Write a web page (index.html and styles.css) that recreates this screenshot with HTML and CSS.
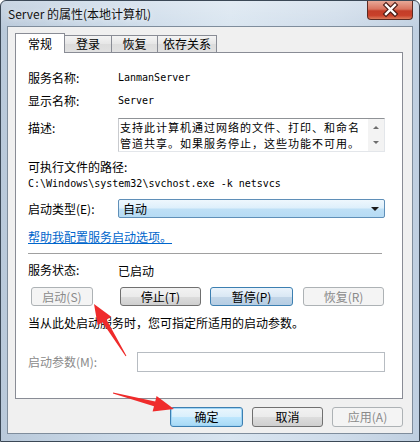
FILE: index.html
```html
<!DOCTYPE html>
<html>
<head>
<meta charset="utf-8">
<link rel="stylesheet" href="styles.css">
</head>
<body>
<div class="window">
  <div class="titlebar">
    <span class="title">Server 的属性(本地计算机)</span>
    <div class="close">
      <svg width="46" height="19" viewBox="0 0 46 19">
        <path d="M19 5 L28 14 M28 5 L19 14" stroke="#4a1a14" stroke-width="4.6" stroke-linecap="square"/>
        <path d="M19 5 L28 14 M28 5 L19 14" stroke="#ffffff" stroke-width="2.4" stroke-linecap="square"/>
      </svg>
    </div>
  </div>
  <div class="client">
    <div class="tabs">
      <div class="tab active">常规</div>
      <div class="tab t2">登录</div>
      <div class="tab t3">恢复</div>
      <div class="tab t4">依存关系</div>
    </div>
    <div class="panel">
      <div class="row r1"><span class="label">服务名称:</span><span class="mono">LanmanServer</span></div>
      <div class="row r2"><span class="label">显示名称:</span><span class="mono">Server</span></div>
      <div class="row desc-row">
        <span class="label desc-label">描述:</span>
        <div class="descbox">
          <div class="desc-text"><div>支持此计算机通过网络的文件、打印、和命名</div><div>管道共享。如果服务停止，这些功能不可用。</div></div>
          <div class="vscroll"><span class="arr-up"></span><span class="arr-down"></span></div>
        </div>
      </div>
      <div class="line exec-label">可执行文件的路径:</div>
      <div class="line mono path">C:\Windows\system32\svchost.exe -k netsvcs</div>
      <div class="row select-row">
        <span class="label">启动类型(E):</span>
        <div class="select"><span>自动</span><span class="caret"></span></div>
      </div>
      <div class="line link">帮助我配置服务启动选项。</div>
      <div class="sep"></div>
      <div class="row status-row"><span class="label">服务状态:</span><span>已启动</span></div>
      <div class="svc-buttons">
        <div class="btn disabled b1">启动(S)</div>
        <div class="btn b2">停止(T)</div>
        <div class="btn hover b3">暂停(P)</div>
        <div class="btn disabled b4">恢复(R)</div>
      </div>
      <div class="line hint">当从此处启动服务时，您可指定所适用的启动参数。</div>
      <div class="row param-row">
        <span class="label param-label">启动参数(M):</span>
        <div class="param-box"></div>
      </div>
    </div>
    <div class="footer">
      <div class="btn default ok">确定</div>
      <div class="btn cancel">取消</div>
      <div class="btn disabled apply">应用(A)</div>
    </div>
  </div>
  <svg class="annot" width="420" height="442" viewBox="0 0 420 442">
    <polygon fill="#ef2b2b" points="126.4,355.7 106.6,319.7 111.3,316.8 94,304 97.7,325.2 102.4,322.3 125.6,356.3"/>
    <polygon fill="#ef2b2b" points="112.9,393.5 154.0,406.3 152.6,411.6 174,409 156.6,396.1 155.2,401.5 113.1,392.5"/>
  </svg>
</div>
</body>
</html>
```

FILE: styles.css
```css
* { box-sizing: border-box; }
html, body { margin: 0; padding: 0; }
body {
  width: 420px;
  height: 442px;
  overflow: hidden;
  font-family: "Noto Sans CJK SC", "Liberation Sans", sans-serif;
  font-size: 12px;
  color: #000;
  background: #fff;
}
.window {
  position: relative;
  width: 420px;
  height: 442px;
  border: 1px solid #3b4856;
  border-radius: 6px 6px 0 0;
  padding: 0 6px 7px 6px;
  background:
    linear-gradient(to bottom, rgba(255,255,255,0.25), rgba(255,255,255,0) 30px),
    linear-gradient(to right, #b9c9da 0%, #c9d8e7 25%, #d9e5f0 55%, #cfdcea 80%, #bfcfe0 100%);
}
.titlebar {
  height: 25px;
  display: flex;
  justify-content: space-between;
  align-items: flex-start;
  padding-left: 1px;
}
.title {
  line-height: 25px;
  font-size: 12px;
  color: #111;
  text-shadow: 0 0 6px rgba(255,255,255,0.9);
}
.close {
  width: 46px;
  height: 19px;
  border: 1px solid #5b2a22;
  border-top: none;
  border-radius: 0 0 4px 4px;
  background: linear-gradient(to bottom, #e8a897 0%, #d9745f 45%, #c33d28 55%, #c9402a 80%, #dc7a5a 100%);
  display: flex;
}
.close svg { display: block; margin: -1px; }
.client {
  width: 406px;
  height: 408px;
  border: 1px solid #7f8d9c;
  background: #f0f0f0;
  padding: 6px 0 0 7px;
}
.tabs {
  display: flex;
  align-items: flex-end;
  height: 20px;
}
.tab {
  height: 17px;
  margin-bottom: 1px;
  border: 1px solid #898c95;
  border-bottom: none;
  background: linear-gradient(to bottom, #f4f4f4, #e6e6e6 50%, #dcdcdc 51%, #e1e1e1);
  text-align: center;
  line-height: 15px;
  font-size: 12px;
  margin-left: -1px;
}
.tab.active {
  position: relative;
  z-index: 1;
  height: 20px;
  margin-bottom: 0;
  margin-left: 0;
  width: 50px;
  background: #fff;
  line-height: 19px;
}
.t2 { width: 48px; }
.t3 { width: 47px; }
.t4 { width: 60px; }
.panel {
  width: 388px;
  height: 347px;
  margin-top: -1px;
  border: 1px solid #898c95;
  background: #fff;
  padding: 17px 17px 0 12px;
}
.row {
  display: flex;
  align-items: center;
}
.label {
  width: 90px;
  flex: none;
  line-height: 16px;
}
.mono {
  font-family: "DejaVu Sans Mono", "Liberation Mono", monospace;
  font-size: 10px;
  line-height: 16px;
}
.r1 { height: 16px; }
.r2 { height: 16px; margin-top: 7px; }
.desc-row { margin-top: 9px; align-items: flex-start; }
.desc-label { padding-top: 2px; }
.descbox {
  width: 267px;
  height: 34px;
  display: flex;
  border-top: 1px solid #8f9296;
  border-left: 1px solid #c9cbcf;
  border-right: 1px solid #e3e6ea;
  border-bottom: 1px solid #e3e6ea;
}
.desc-text {
  flex: 1;
  padding-left: 1px;
  line-height: 16px;
  font-size: 11px;
  letter-spacing: 1px;
  white-space: nowrap;
}
.vscroll {
  width: 16px;
  flex: none;
  background: #f3f3f3;
  display: flex;
  flex-direction: column;
  align-items: center;
  justify-content: center;
  gap: 12px;
}
.arr-up, .arr-down {
  width: 0;
  height: 0;
  border-left: 3px solid transparent;
  border-right: 3px solid transparent;
}
.arr-up { border-bottom: 3px solid #6d6d6d; }
.arr-down { border-top: 3px solid #6d6d6d; }
.line { line-height: 16px; height: 16px; }
.exec-label { margin-top: 7px; }
.path { margin-top: 1px; }
.select-row { margin-top: 7px; }
.select {
  width: 267px;
  height: 19px;
  border: 1px solid #5f8fb8;
  border-radius: 2px;
  background: linear-gradient(to bottom, #eef7fd 0%, #ddeffb 48%, #bfe0f6 52%, #b6dbf4 100%);
  display: flex;
  align-items: center;
  justify-content: space-between;
  padding: 0 5px 0 4px;
}
.caret {
  width: 0;
  height: 0;
  border-left: 4px solid transparent;
  border-right: 4px solid transparent;
  border-top: 4px solid #1a1a1a;
}
.link {
  margin-top: 11px;
  color: #0066cc;
  text-decoration: underline;
}
.sep {
  width: 354px;
  height: 1px;
  margin-top: 8px;
  background: #a0a0a0;
}
.status-row { margin-top: 8px; height: 16px; }
.svc-buttons {
  display: flex;
  margin-top: 9px;
  height: 19px;
}
.btn {
  height: 19px;
  border: 1px solid #707070;
  border-radius: 3px;
  background: linear-gradient(to bottom, #f2f2f2 0%, #ebebeb 50%, #dddddd 51%, #cfcfcf 100%);
  text-align: center;
  line-height: 17px;
  font-size: 12px;
  color: #000;
}
.btn.disabled {
  border-color: #adb2b5;
  background: #f4f4f4;
  color: #8a8a8a;
}
.btn.hover {
  border-color: #3c7fb1;
  background: linear-gradient(to bottom, #eaf3fb 0%, #dae8f4 50%, #c2d6e8 51%, #b6cde3 100%);
}
.b1 { width: 62px; margin-left: 3px; }
.b2 { width: 81px; margin-left: 27px; }
.b3 { width: 83px; margin-left: 9px; }
.b4 { width: 81px; margin-left: 10px; }
.hint { margin-top: 9px; }
.param-row { margin-top: 21px; }
.param-label { width: 109px; color: #8a8a8a; }
.param-box {
  width: 248px;
  height: 20px;
  border: 1px solid #b7bcc2;
  background: #fff;
}
.footer {
  display: flex;
  gap: 9px;
  margin-top: 8px;
  padding-left: 155px;
}
.footer .btn { height: 20px; line-height: 18px; }
.ok {
  width: 73px;
  border-color: #3c7fb1;
  box-shadow: 0 0 0 1px #9fd4f5 inset;
  background: linear-gradient(to bottom, #eaf6fd 0%, #d9effc 50%, #bee6fd 51%, #a7d9f5 100%);
}
.cancel { width: 71px; }
.apply { width: 71px; }
.annot {
  position: absolute;
  left: -1px;
  top: -1px;
  pointer-events: none;
}
```
